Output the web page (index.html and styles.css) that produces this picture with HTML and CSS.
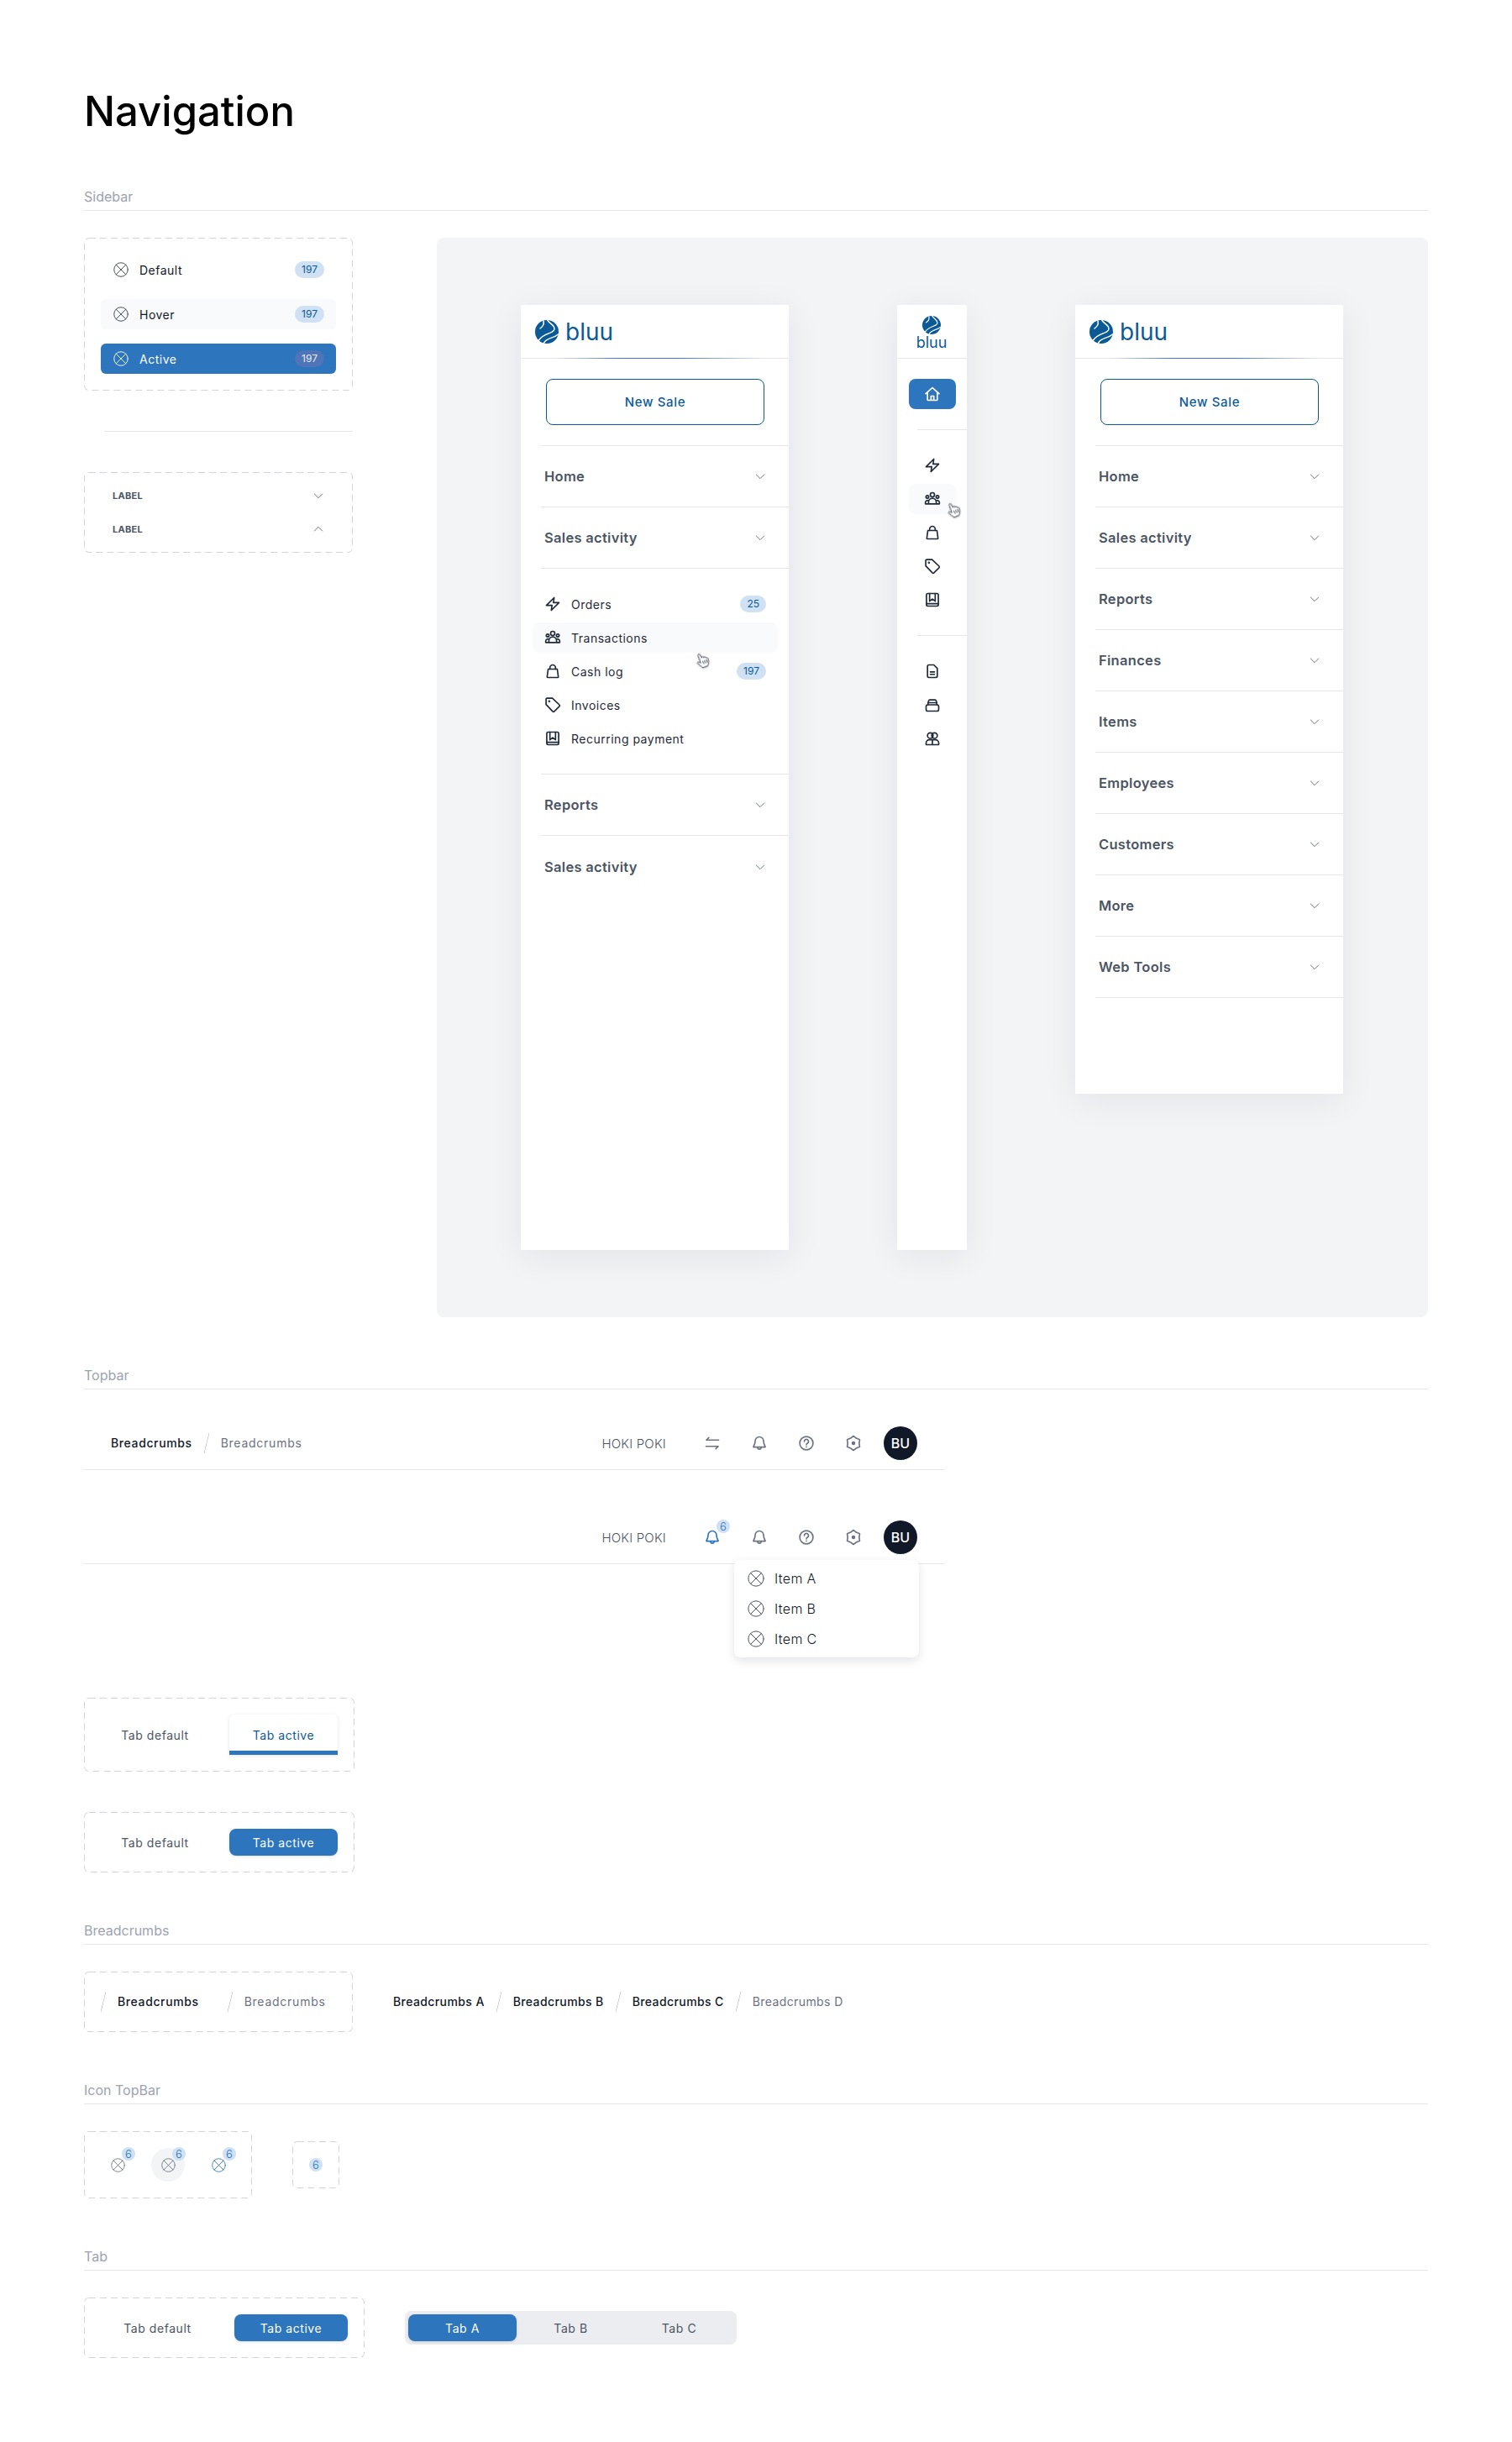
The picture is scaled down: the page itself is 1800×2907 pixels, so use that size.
FILE: index.html
```html
<!DOCTYPE html>
<html lang="en">
<head>
<meta charset="utf-8">
<title>Navigation</title>
<link rel="stylesheet" href="styles.css">
</head>
<body>
<svg class="sprite" xmlns="http://www.w3.org/2000/svg">
  <symbol id="i-x" viewBox="0 0 24 24"><circle cx="12" cy="12" r="11"/><path d="M4.2 4.2l15.6 15.6M19.8 4.2L4.2 19.8"/></symbol>
  <symbol id="i-chev" viewBox="0 0 24 24"><path d="M5 9l7 7 7-7"/></symbol>
  <symbol id="i-chev-up" viewBox="0 0 24 24"><path d="M5 15l7-7 7 7"/></symbol>
  <symbol id="i-bolt" viewBox="0 0 24 24"><path d="M14 3l-1 7h8L10 21l1-7H3z"/></symbol>
  <symbol id="i-group" viewBox="0 0 24 24"><circle cx="12" cy="6" r="3"/><circle cx="4.8" cy="9" r="2"/><circle cx="19.2" cy="9" r="2"/><path d="M2 19h20M6.500 19v-2.500a5.500 5.500 0 0 1 11 0V19M2 19v-2a3 3 0 0 1 4.800-2.400M22 19v-2a3 3 0 0 0-4.800-2.400"/></symbol>
  <symbol id="i-bag" viewBox="0 0 24 24"><path d="M5.500 9h13l1.500 11a1 1 0 0 1-1 1H5a1 1 0 0 1-1-1z"/><path d="M8 9V7a4 4 0 0 1 8 0v2"/></symbol>
  <symbol id="i-tag" viewBox="0 0 24 24"><path d="M2.500 4a1.500 1.500 0 0 1 1.500-1.500h7.500L21.500 12a1.600 1.600 0 0 1 0 2.200l-7.300 7.300a1.600 1.600 0 0 1-2.200 0L2.500 11.500z"/><circle cx="7" cy="7" r=".6"/></symbol>
  <symbol id="i-book" viewBox="0 0 24 24"><rect x="3.500" y="3" width="17" height="18" rx="2"/><path d="M8 3v11l4-3 4 3V3M3.500 17.500h17"/></symbol>
  <symbol id="i-doc" viewBox="0 0 24 24"><path d="M7 3h7l5 5v11a2 2 0 0 1-2 2H7a2 2 0 0 1-2-2V5a2 2 0 0 1 2-2z"/><path d="M9 13h6M9 16.500h6"/></symbol>
  <symbol id="i-store" viewBox="0 0 24 24"><rect x="3" y="12" width="18" height="9" rx="2.500"/><path d="M5.500 12l1-5.500A2 2 0 0 1 8.500 5h7a2 2 0 0 1 2 1.500l1 5.500M5.500 9h13"/></symbol>
  <symbol id="i-users" viewBox="0 0 24 24"><circle cx="9" cy="8" r="4"/><circle cx="15" cy="8" r="4"/><path d="M3 21v-2.500A4.500 4.500 0 0 1 7.500 14h9a4.500 4.500 0 0 1 4.500 4.500V21zM12 14.500V21"/></symbol>
  <symbol id="i-home" viewBox="0 0 24 24"><path d="M2.500 11.500L12 3l9.500 8.500M5 10v10a1 1 0 0 0 1 1h12a1 1 0 0 0 1-1V10M10 21v-6h4v6"/></symbol>
  <symbol id="i-swap" viewBox="0 0 24 24"><path d="M21 7.500H3.500L7 4M3 16.500h17.500L17 20"/></symbol>
  <symbol id="i-bell" viewBox="0 0 24 24"><path d="M12 3a6 6 0 0 0-6 6c0 5-2.500 7-2.500 8.500h17C20.500 16 18 14 18 9a6 6 0 0 0-6-6z"/><path d="M9.500 18a2.500 2.500 0 0 0 5 0"/></symbol>
  <symbol id="i-help" viewBox="0 0 24 24"><circle cx="12" cy="12" r="9.500"/><path d="M9 9.500a3 3 0 1 1 4.500 2.600c-1 .6-1.500 1.200-1.500 2.400M12 17.300v.2"/></symbol>
  <symbol id="i-cog" viewBox="0 0 24 24"><path d="M12 1.800L16.100 4.900 20.900 6.900 20.200 12 20.900 17.100 16.100 19.100 12 22.200 7.900 19.100 3.100 17.100 3.800 12 3.100 6.900 7.900 4.900z"/><circle cx="12" cy="12" r="1.700" fill="currentColor"/></symbol>
  <symbol id="i-hand" viewBox="0 0 24 28"><path d="M7 2.500a1.800 1.800 0 0 1 3.500-.4l2 7 .3-1.200a1.700 1.700 0 0 1 3.200.4l.3 1.600.5-.8a1.700 1.700 0 0 1 3 .8l.4 1.400a1.600 1.600 0 0 1 2.700 1l-.4 6c-.3 3-2 5-3 6.700l-9.500 1.500c-1.500-3-4.500-6-7-9.500-1.200-1.800.6-3.300 2.200-2l2.800 2.300z"/><path d="M12.500 15l1 5M16 14.500l.8 5M19.500 14l.4 5"/></symbol>
  <symbol id="i-globe" viewBox="0 0 28 28"><circle class="globe-bg" cx="14" cy="14" r="14"/><path class="globe-line" d="M15 .5c3.500 5 9.500 6 7.500 11.500C20 16.500 10 15.500 4.500 24"/><path class="globe-line" d="M10.500 27.500c2.500-6.500 11.500-5.500 17-10.500"/><path class="globe-line" d="M10 1c1 4-1 7-4 9"/></symbol>
</svg>

<main class="page">
  <h1 class="title">Navigation</h1>

  <section class="section section-first">
    <h2 class="section-head">Sidebar</h2>
    <div class="sidebar-grid">
      <div class="variants">
        <div class="dash rows-box">
          <div class="side-row"><svg class="ico-x"><use href="#i-x"/></svg><span class="side-label">Default</span><span class="badge">197</span></div>
          <div class="side-row side-row-hover"><svg class="ico-x"><use href="#i-x"/></svg><span class="side-label">Hover</span><span class="badge">197</span></div>
          <div class="side-row side-row-active"><svg class="ico-x"><use href="#i-x"/></svg><span class="side-label">Active</span><span class="badge badge-on">197</span></div>
        </div>
        <hr class="inset-rule">
        <div class="dash labels-box">
          <div class="label-row"><span>LABEL</span><svg class="ico-chev"><use href="#i-chev"/></svg></div>
          <div class="label-row"><span>LABEL</span><svg class="ico-chev"><use href="#i-chev-up"/></svg></div>
        </div>
      </div>

      <div class="panel">
        <aside class="side side-long">
          <div class="side-top"><svg class="logo-globe"><use href="#i-globe"/></svg><span class="logo-word">bluu</span></div>
          <div class="side-cta"><button class="btn-outline">New Sale</button></div>
          <div class="nav-head"><span>Home</span><svg class="ico-chev"><use href="#i-chev"/></svg></div>
          <div class="nav-head"><span>Sales activity</span><svg class="ico-chev"><use href="#i-chev"/></svg></div>
          <div class="nav-open">
            <div class="nav-item"><svg class="ico"><use href="#i-bolt"/></svg><span class="side-label">Orders</span><span class="badge">25</span></div>
            <div class="nav-item nav-item-hover"><svg class="ico"><use href="#i-group"/></svg><span class="side-label">Transactions</span><svg class="hand hand-a"><use href="#i-hand"/></svg></div>
            <div class="nav-item"><svg class="ico"><use href="#i-bag"/></svg><span class="side-label">Cash log</span><span class="badge">197</span></div>
            <div class="nav-item"><svg class="ico"><use href="#i-tag"/></svg><span class="side-label">Invoices</span></div>
            <div class="nav-item"><svg class="ico"><use href="#i-book"/></svg><span class="side-label">Recurring payment</span></div>
          </div>
          <div class="nav-head"><span>Reports</span><svg class="ico-chev"><use href="#i-chev"/></svg></div>
          <div class="nav-head nav-head-end"><span>Sales activity</span><svg class="ico-chev"><use href="#i-chev"/></svg></div>
        </aside>

        <aside class="side side-mini side-long">
          <div class="mini-top"><svg class="logo-globe-sm"><use href="#i-globe"/></svg><span class="logo-word-sm">bluu</span></div>
          <div class="side-cta mini-cta"><div class="mini-home"><svg class="ico ico-white"><use href="#i-home"/></svg></div></div>
          <div class="mini-group">
            <div class="mini-item"><svg class="ico"><use href="#i-bolt"/></svg></div>
            <div class="mini-item mini-item-hover"><svg class="ico"><use href="#i-group"/></svg><svg class="hand hand-b"><use href="#i-hand"/></svg></div>
            <div class="mini-item"><svg class="ico"><use href="#i-bag"/></svg></div>
            <div class="mini-item"><svg class="ico"><use href="#i-tag"/></svg></div>
            <div class="mini-item"><svg class="ico"><use href="#i-book"/></svg></div>
          </div>
          <div class="mini-group">
            <div class="mini-item"><svg class="ico"><use href="#i-doc"/></svg></div>
            <div class="mini-item"><svg class="ico"><use href="#i-store"/></svg></div>
            <div class="mini-item"><svg class="ico"><use href="#i-users"/></svg></div>
          </div>
        </aside>

        <aside class="side side-short">
          <div class="side-top"><svg class="logo-globe"><use href="#i-globe"/></svg><span class="logo-word">bluu</span></div>
          <div class="side-cta"><button class="btn-outline">New Sale</button></div>
          <div class="nav-head"><span>Home</span><svg class="ico-chev"><use href="#i-chev"/></svg></div>
          <div class="nav-head"><span>Sales activity</span><svg class="ico-chev"><use href="#i-chev"/></svg></div>
          <div class="nav-head"><span>Reports</span><svg class="ico-chev"><use href="#i-chev"/></svg></div>
          <div class="nav-head"><span>Finances</span><svg class="ico-chev"><use href="#i-chev"/></svg></div>
          <div class="nav-head"><span>Items</span><svg class="ico-chev"><use href="#i-chev"/></svg></div>
          <div class="nav-head"><span>Employees</span><svg class="ico-chev"><use href="#i-chev"/></svg></div>
          <div class="nav-head"><span>Customers</span><svg class="ico-chev"><use href="#i-chev"/></svg></div>
          <div class="nav-head"><span>More</span><svg class="ico-chev"><use href="#i-chev"/></svg></div>
          <div class="nav-head nav-head-last"><span>Web Tools</span><svg class="ico-chev"><use href="#i-chev"/></svg></div>
        </aside>
      </div>
    </div>
  </section>

  <section class="section">
    <h2 class="section-head">Topbar</h2>
    <div class="topbars">
      <div class="topbar">
        <div class="top-crumbs"><span class="crumb">Breadcrumbs</span><span class="slash"></span><span class="crumb crumb-muted">Breadcrumbs</span></div>
        <span class="top-name">HOKI POKI</span>
        <div class="top-slot"><svg class="ico ico-gray"><use href="#i-swap"/></svg></div>
        <div class="top-slot"><svg class="ico ico-gray"><use href="#i-bell"/></svg></div>
        <div class="top-slot"><svg class="ico ico-gray"><use href="#i-help"/></svg></div>
        <div class="top-slot"><svg class="ico ico-gray"><use href="#i-cog"/></svg></div>
        <div class="top-slot"><span class="avatar">BU</span></div>
      </div>
      <div class="topbar">
        <div class="top-crumbs"></div>
        <span class="top-name">HOKI POKI</span>
        <div class="top-slot"><svg class="ico ico-blue"><use href="#i-bell"/></svg><span class="count count-bell">6</span></div>
        <div class="top-slot"><svg class="ico ico-gray"><use href="#i-bell"/></svg></div>
        <div class="top-slot"><svg class="ico ico-gray"><use href="#i-help"/></svg></div>
        <div class="top-slot"><svg class="ico ico-gray"><use href="#i-cog"/></svg></div>
        <div class="top-slot"><span class="avatar">BU</span></div>
        <div class="menu">
          <div class="menu-item"><svg class="ico-x ico-x-lg"><use href="#i-x"/></svg><span>Item A</span></div>
          <div class="menu-item"><svg class="ico-x ico-x-lg"><use href="#i-x"/></svg><span>Item B</span></div>
          <div class="menu-item"><svg class="ico-x ico-x-lg"><use href="#i-x"/></svg><span>Item C</span></div>
        </div>
      </div>
    </div>
    <div class="tab-stack">
      <div class="dash tabs-box">
        <span class="tab">Tab default</span>
        <span class="tab tab-line">Tab active</span>
      </div>
      <div class="dash tabs-box">
        <span class="tab tab-short">Tab default</span>
        <span class="tab tab-short tab-pill">Tab active</span>
      </div>
    </div>
  </section>

  <section class="section">
    <h2 class="section-head">Breadcrumbs</h2>
    <div class="crumb-row">
      <div class="dash crumb-box">
        <div class="crumb-set"><span class="slash"></span><span class="crumb">Breadcrumbs</span></div>
        <div class="crumb-set"><span class="slash"></span><span class="crumb crumb-muted">Breadcrumbs</span></div>
      </div>
      <div class="crumb-set crumb-set-long">
        <span class="crumb">Breadcrumbs A</span><span class="slash"></span>
        <span class="crumb">Breadcrumbs B</span><span class="slash"></span>
        <span class="crumb">Breadcrumbs C</span><span class="slash"></span>
        <span class="crumb crumb-muted">Breadcrumbs D</span>
      </div>
    </div>
  </section>

  <section class="section">
    <h2 class="section-head">Icon TopBar</h2>
    <div class="icon-row">
      <div class="dash icon-box">
        <div class="icon-cell"><svg class="ico-x ico-x-gray"><use href="#i-x"/></svg><span class="count count-cell">6</span></div>
        <div class="icon-cell icon-cell-hover"><svg class="ico-x ico-x-gray"><use href="#i-x"/></svg><span class="count count-cell">6</span></div>
        <div class="icon-cell"><svg class="ico-x ico-x-blue"><use href="#i-x"/></svg><span class="count count-cell">6</span></div>
      </div>
      <div class="dash count-box"><span class="count">6</span></div>
    </div>
  </section>

  <section class="section">
    <h2 class="section-head">Tab</h2>
    <div class="tab-row">
      <div class="dash tabs-box tabs-box-wide">
        <span class="tab tab-short tab-wide">Tab default</span>
        <span class="tab tab-short tab-wide tab-pill">Tab active</span>
      </div>
      <div class="segment">
        <span class="tab tab-short tab-pill">Tab A</span>
        <span class="tab tab-short">Tab B</span>
        <span class="tab tab-short">Tab C</span>
      </div>
    </div>
  </section>
</main>
</body>
</html>
```

FILE: styles.css
```css
* { box-sizing: border-box; }
html, body { margin: 0; padding: 0; background: #fff; }
body { font-family: Inter, "Liberation Sans", sans-serif; color: #111827; }
.sprite { display: none; }
svg { display: block; fill: none; stroke: currentColor; stroke-linecap: round; stroke-linejoin: round; flex: none; }

.page { width: 1800px; height: 2907px; padding: 103px 100px 0; overflow: hidden; }
.title { margin: 0 0 60px; font-size: 49px; line-height: 60px; font-weight: 500; color: #000; letter-spacing: 0; }

.section { margin-top: 58px; }
.section-first { margin-top: 0; }
.section-head { margin: 0 0 32px; padding: 1px 0 6px; height: 28px; font-size: 16px; line-height: 20px; font-weight: 400; color: #9ca3af; border-bottom: 1px solid #e5e7eb; }

.dash {
  background-image: url("data:image/svg+xml,%3Csvg xmlns='http://www.w3.org/2000/svg' width='100%25' height='100%25'%3E%3Crect width='100%25' height='100%25' fill='none' rx='6' ry='6' stroke='%23d1d5db' stroke-width='2' stroke-dasharray='8 5'/%3E%3C/svg%3E");
  border-radius: 6px;
}

/* Sidebar variants */
.sidebar-grid { display: grid; grid-template-columns: 320px 1180px; column-gap: 100px; align-items: start; }
.rows-box { display: flex; flex-direction: column; gap: 17px; padding: 20px; height: 182px; }
.side-row { display: flex; align-items: center; gap: 13px; height: 36px; padding: 0 14px 0 15px; border-radius: 6px; }
.side-row-hover { background: #f9fafb; }
.side-row-active { background: #2d75bd; color: #fff; }
.side-label { flex: 1; font-size: 14px; letter-spacing: .5px; color: inherit; white-space: nowrap; }
.ico-x { width: 18px; height: 18px; color: #374151; stroke-width: 1.2; }
.side-row-active .ico-x { color: #fff; }
.ico-x-lg { width: 20px; height: 20px; color: #4b5563; }
.ico-x-gray { width: 17px; height: 17px; color: #6b7280; }
.ico-x-blue { width: 17px; height: 17px; color: #2d75bd; }
.badge { height: 20px; padding: 0 8px; border-radius: 10px; background: #cfe1f2; color: #0b5a96; font-size: 12px; line-height: 20px; }
.badge-on { background: #4f74b8; color: #e8eef8; }
.inset-rule { margin: 48px 0 48px 24px; border: 0; border-top: 1px solid #e5e7eb; }
.labels-box { padding: 8px 33px 8px 34px; height: 96px; }
.label-row { display: flex; align-items: center; justify-content: space-between; height: 40px; font-size: 11px; font-weight: 700; color: #4b5563; letter-spacing: .3px; }
.ico-chev { width: 16px; height: 16px; color: #6b7280; stroke-width: 1.500; }

/* Panel with sidebars */
.panel { display: flex; justify-content: space-between; align-items: flex-start; height: 1285px; padding: 80px 101px 80px 100px; background: #f3f4f6; border-radius: 8px; }
.side { width: 319px; background: #fff; box-shadow: 0 8px 40px rgba(17, 24, 39, .07); }
.side-long { height: 1125px; }
.side-short { height: 939px; }
.side-top { position: relative; display: flex; align-items: center; gap: 8px; height: 64px; padding: 0 0 0 17px; border-bottom: 1px solid #e5e7eb; }
.side-top::after { content: ""; position: absolute; left: 40px; right: 30px; bottom: -1px; height: 1px; background: linear-gradient(90deg, rgba(45, 117, 189, 0), #3f78c4 30%, #3f78c4 60%, rgba(45, 117, 189, 0)); }
.logo-globe { width: 28px; height: 28px; }
.globe-bg { fill: #0b5a96; stroke: none; }
.globe-line { stroke: #fff; stroke-width: 1.500; fill: none; }
.logo-word { font-size: 28px; line-height: 30px; color: #0b5a96; }
.side-cta { padding: 24px 30px; }
.btn-outline { display: block; width: 260px; height: 55px; padding: 0; background: #fff; border: 1px solid #0b5a96; border-radius: 8px; color: #0b5a96; font: 500 15px Inter, "Liberation Sans", sans-serif; letter-spacing: .65px; }
.nav-head { display: flex; align-items: center; justify-content: space-between; height: 73px; margin-left: 24px; padding: 0 26px 0 4px; border-top: 1px solid #e5e7eb; font-size: 16.500px; letter-spacing: .3px; font-weight: 600; color: #4b5563; }
.nav-head-end { padding-top: 2px; }
.nav-head-last { height: 74px; border-bottom: 1px solid #e5e7eb; }
.nav-open { display: flex; flex-direction: column; gap: 4px; margin-left: 24px; padding: 24px 13px 24px 0; border-top: 1px solid #e5e7eb; }
.nav-item { position: relative; display: flex; align-items: center; gap: 12px; height: 36px; margin-left: -10px; padding: 0 14px; border-radius: 8px; color: #1f2937; }
.nav-item-hover { background: #f9fafb; }
.ico { width: 20px; height: 20px; stroke-width: 2; color: #1f2937; }
.ico-white { color: #fff; }
.ico-gray { color: #6b7280; }
.ico-blue { color: #2d75bd; }
.hand { position: absolute; width: 16px; height: 19px; color: #374151; fill: #fff; stroke-width: 1.300; filter: drop-shadow(0 1px 1px rgba(0, 0, 0, .25)); transform: rotate(-14deg); }
.hand-a { left: 194px; top: 36px; }
.hand-b { left: 45px; top: 22px; }

/* Collapsed sidebar */
.side-mini { width: 83px; }
.mini-top { display: flex; flex-direction: column; align-items: center; height: 64px; padding: 13px 1px 0 0; border-bottom: 1px solid #e5e7eb; }
.logo-globe-sm { width: 22px; height: 22px; }
.logo-word-sm { font-size: 18px; line-height: 17px; color: #0b5a96; margin-top: 1px; }
.mini-cta { padding: 24px 13px 24px 14px; }
.mini-home { display: flex; align-items: center; justify-content: center; width: 56px; height: 36px; background: #2d75bd; border-radius: 8px; }
.mini-group { display: flex; flex-direction: column; gap: 4px; margin-left: 24px; padding: 24px 0; border-top: 1px solid #e5e7eb; }
.mini-item { position: relative; display: flex; align-items: center; justify-content: center; width: 56px; height: 36px; margin-left: -10px; border-radius: 8px; }
.mini-item-hover { background: #f9fafb; }

/* Topbar */
.topbars { display: flex; flex-direction: column; gap: 48px; width: 1024px; }
.topbar { position: relative; display: flex; align-items: center; height: 64px; padding: 1px 24px 0 32px; border-bottom: 1px solid #e5e7eb; }
.top-crumbs { display: flex; align-items: center; gap: 14px; flex: 1; }
.crumb { font-size: 14px; line-height: 24px; font-weight: 500; color: #111827; letter-spacing: .62px; white-space: nowrap; }
.crumb-muted { font-weight: 400; color: #6b7280; letter-spacing: .75px; }
.crumb-set-long .crumb { letter-spacing: .4px; }
.slash { width: 6px; height: 24px; flex: none; background: linear-gradient(to top left, transparent calc(50% - .6px), #d1d5db calc(50% - .6px), #d1d5db calc(50% + .6px), transparent calc(50% + .6px)); }
.top-name { margin-right: 27px; font-size: 15px; font-weight: 300; color: #4b5563; letter-spacing: .2px; }
.top-slot { position: relative; display: flex; align-items: center; justify-content: center; width: 56px; height: 40px; }
.avatar { display: flex; align-items: center; justify-content: center; width: 40px; height: 40px; border-radius: 50%; background: #111827; color: #fff; font-size: 16px; font-weight: 500; }
.count { display: flex; align-items: center; justify-content: center; width: 16px; height: 16px; border-radius: 50%; background: #cfe1f2; color: #2d75bd; font-size: 13px; font-weight: 300; }
.count-bell { position: absolute; left: 33px; top: -1px; }
.menu { position: absolute; left: 774px; top: 59px; width: 220px; padding: 4px 16px; background: #fff; border-radius: 8px; box-shadow: 0 4px 12px rgba(17, 24, 39, .12); }
.menu-item { display: flex; align-items: center; gap: 12px; height: 36px; font-size: 16px; font-weight: 300; color: #111827; letter-spacing: .35px; }

/* Tabs */
.tab-stack { display: flex; flex-direction: column; gap: 48px; margin-top: 159px; }
.tabs-box { display: flex; gap: 24px; width: 322px; padding: 20px; }
.tab { display: flex; align-items: center; justify-content: center; position: relative; width: 129px; height: 48px; font-size: 14px; color: #4b5563; letter-spacing: .55px; }
.tab-line { color: #0b5a96; border-bottom: 5px solid #2d75bd; padding-top: 5px; border-radius: 6px 6px 0 0; box-shadow: 0 1px 4px rgba(17, 24, 39, .12); }
.tab-short { height: 32px; }
.tab-pill { background: #2d75bd; color: #fff; border-radius: 8px; box-shadow: 0 1px 3px rgba(17, 24, 39, .15); }
.tabs-box-wide { width: 334px; }
.tab-wide { width: 135px; }

/* Breadcrumb samples */
.crumb-row { display: flex; align-items: center; gap: 48px; }
.crumb-box { display: flex; align-items: center; gap: 34px; width: 320px; height: 72px; padding: 0 20px; }
.crumb-set { display: flex; align-items: center; gap: 14px; }

/* Icon topbar */
.icon-row { display: flex; align-items: center; gap: 48px; }
.icon-box { display: flex; align-items: center; gap: 20px; width: 200px; height: 80px; padding: 20px; }
.icon-cell { position: relative; display: flex; align-items: center; justify-content: center; width: 40px; height: 40px; border-radius: 50%; }
.icon-cell-hover { background: #f3f4f6; }
.count-cell { position: absolute; left: 25px; top: -1px; }
.count-box { display: flex; align-items: center; justify-content: center; width: 56px; height: 56px; }

/* Tab row */
.tab-row { display: flex; align-items: center; gap: 48px; }
.segment { display: flex; align-items: center; width: 395px; height: 40px; padding: 0 4px; background: #ecedf1; border-radius: 8px; }
```
